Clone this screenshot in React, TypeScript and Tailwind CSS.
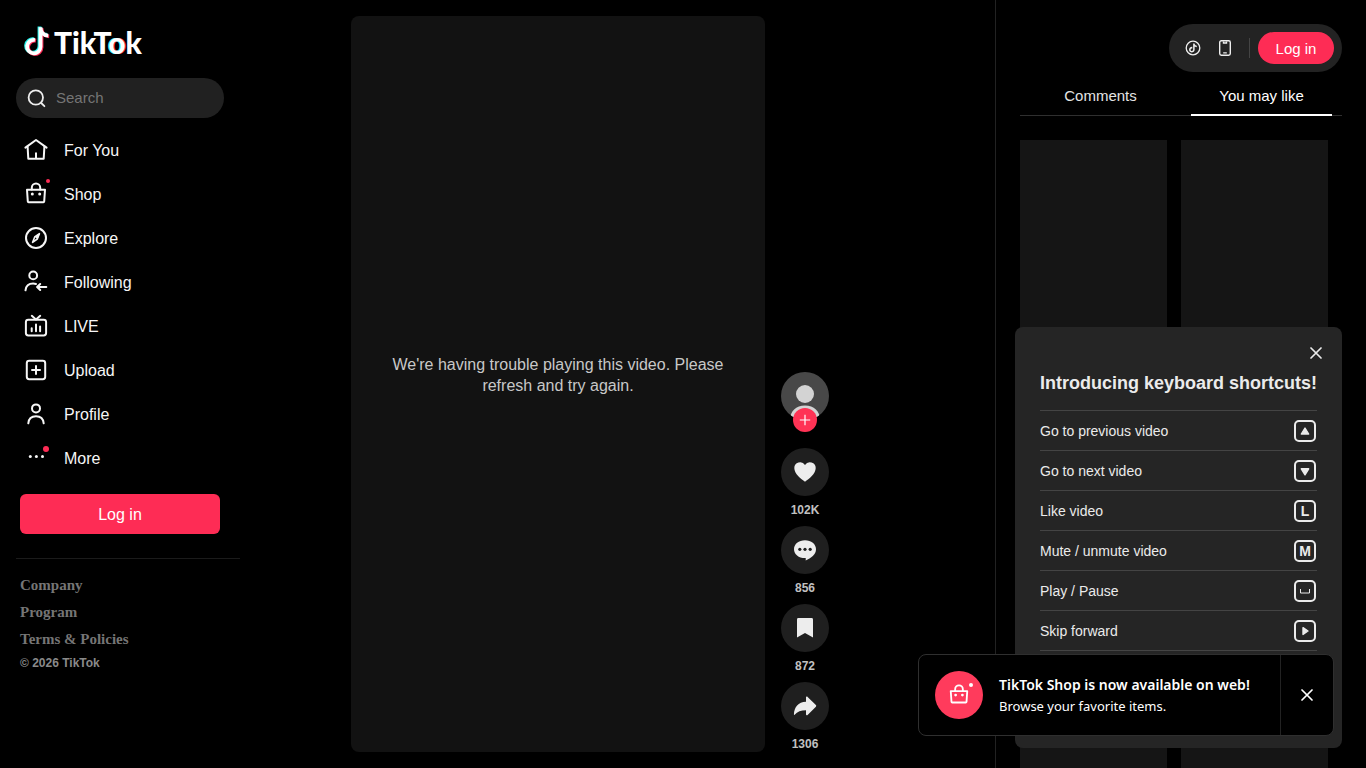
import type { ReactNode } from "react";

const NOTE =
  "M12.525.02c1.31-.02 2.61-.01 3.91-.02.08 1.53.63 3.09 1.75 4.17 1.12 1.11 2.7 1.62 4.24 1.79v4.03c-1.44-.05-2.89-.35-4.2-.97-.57-.26-1.1-.59-1.62-.93-.01 2.92.01 5.84-.02 8.75-.08 1.4-.54 2.79-1.35 3.94-1.31 1.92-3.58 3.17-5.91 3.21-1.43.08-2.86-.31-4.08-1.03-2.02-1.19-3.44-3.37-3.65-5.71-.02-.5-.03-1-.01-1.49.18-1.9 1.12-3.72 2.58-4.96 1.66-1.44 3.98-2.13 6.15-1.72.02 1.48-.04 2.96-.04 4.44-.99-.32-2.15-.23-3.02.37-.63.41-1.11 1.04-1.36 1.75-.21.51-.15 1.07-.14 1.61.24 1.64 1.82 3.02 3.5 2.87 1.12-.01 2.19-.66 2.77-1.61.19-.33.4-.67.41-1.06.1-1.79.06-3.57.07-5.36.01-4.03-.01-8.05.02-12.07z";

const LOGO_NOTE = "M10.400 13.300A6.700 6.700 0 1 0 15.900 20V.6M15.900.6C16.100 5.400 19 8.800 23.600 9";

function Line({ children, width = 2 }: { children: ReactNode; width?: number }) {
  return (
    <svg
      viewBox="0 0 24 24"
      className="size-6 shrink-0"
      fill="none"
      stroke="currentColor"
      strokeWidth={width}
      strokeLinecap="round"
      strokeLinejoin="round"
      aria-hidden="true"
    >
      {children}
    </svg>
  );
}

function Bag() {
  return (
    <>
      <path d="M3 7.700h18l-.8 11.800a.8.8 0 0 1-.8.700H4.600a.8.8 0 0 1-.8-.700Z" />
      <path d="M7.800 7.500V5.700a4.200 4.200 0 0 1 8.400 0v1.800" />
      <circle cx="8.300" cy="12" r="1.500" fill="currentColor" stroke="none" />
      <circle cx="15.700" cy="12" r="1.500" fill="currentColor" stroke="none" />
    </>
  );
}

function Cross() {
  return (
    <svg viewBox="0 0 12 12" className="size-3" fill="none" stroke="currentColor" strokeWidth="1.7" strokeLinecap="round" aria-hidden="true">
      <path d="M1 1l10 10M11 1L1 11" />
    </svg>
  );
}

const nav: { label: string; icon: ReactNode; dot?: "small" | "large" }[] = [
  {
    label: "For You",
    icon: (
      <Line>
        <path d="M1.400 9.600 12 2l10.600 7.600" />
        <path d="M3.600 8.600l.7 12.200h15.400l.7-12.200M12 15.200V20.500" />
      </Line>
    ),
  },
  { label: "Shop", dot: "small", icon: <Line><Bag /></Line> },
  {
    label: "Explore",
    icon: (
      <Line>
        <circle cx="12" cy="12" r="10" />
        <path d="M15.4 7.6 13.3 13l-4.7 3.4L10.700 11Z" strokeWidth="1.600" />
        <path d="M15.9 7.2 13.6 13.2l-1.600-1.200-1.200-1.600Z" fill="currentColor" stroke="none" />
      </Line>
    ),
  },
  {
    label: "Following",
    icon: (
      <Line>
        <circle cx="9.200" cy="5.400" r="3.900" />
        <path d="M1.500 20.300c.5-4.400 3.600-6.800 7.600-6.800 1.100 0 2 .2 2.900.5" />
        <path d="M22.300 17h-9M16.200 14l-3.100 3 3.100 3" />
      </Line>
    ),
  },
  {
    label: "LIVE",
    icon: (
      <Line>
        <rect x="1.900" y="5.700" width="20.200" height="15.800" rx="2.400" />
        <path d="M7.800 1.800 12 5.400l4.200-3.600M7.700 14.300v2.900M12 10.600v6.600M16.100 12.600v4.600" />
      </Line>
    ),
  },
  {
    label: "Upload",
    icon: (
      <Line>
        <rect x="2.800" y="2.800" width="18.400" height="18.400" rx="2.400" />
        <path d="M12 8v8M8 12h8" />
      </Line>
    ),
  },
  {
    label: "Profile",
    icon: (
      <Line>
        <circle cx="12" cy="6.400" r="4" />
        <path d="M4.300 21.300c.4-4.600 3.300-7.100 7.700-7.100s7.300 2.500 7.700 7.100" />
      </Line>
    ),
  },
  {
    label: "More",
    dot: "large",
    icon: (
      <Line>
        <g fill="currentColor" stroke="none">
          <circle cx="6.300" cy="10.500" r="1.500" />
          <circle cx="12.400" cy="10.500" r="1.500" />
          <circle cx="18.500" cy="10.500" r="1.500" />
        </g>
      </Line>
    ),
  },
];

function Logo() {
  return (
    <a href="#home" aria-label="TikTok" className="flex h-8 items-start gap-1 px-2">
      <svg viewBox="0 0 26 30" className="h-[30px] w-[26px]" fill="none" strokeWidth="3.800" aria-hidden="true">
        <path d={LOGO_NOTE} transform="translate(-0.400 0)" stroke="#25f4ee" />
        <path d={LOGO_NOTE} transform="translate(1.600 1.400)" stroke="#fe2c55" />
        <path d={LOGO_NOTE} transform="translate(0.600 0.700)" stroke="#fff" />
      </svg>
      <span className="pt-0.5 font-['Lato',sans-serif] text-[30px] leading-7 font-black text-white">
        TikT
        <span className="[text-shadow:-1px_0_0_#25f4ee,1px_0_0_#fe2c55]">o</span>k
      </span>
    </a>
  );
}

function Sidebar() {
  return (
    <aside className="flex w-60 shrink-0 flex-col pt-[26px]">
      <div className="px-4">
        <Logo />
        <div className="mt-5 flex h-10 items-center gap-2 rounded-full bg-[#212121] px-2">
          <label htmlFor="search" aria-label="Search">
            <svg viewBox="0 0 24 24" className="size-6" fill="none" stroke="#eee" strokeWidth="1.800" strokeLinecap="round" aria-hidden="true">
              <circle cx="11.800" cy="11.500" r="7.200" />
              <path d="M17.200 17l3.200 3.200" />
            </svg>
          </label>
          <input
            id="search"
            type="search"
            placeholder="Search"
            className="w-32 bg-transparent text-[15px] text-white outline-none placeholder:text-[#757575]"
          />
        </div>
      </div>
      <nav className="mt-[10px] px-4">
        <ul>
          {nav.map((item) => (
            <li key={item.label}>
              <a href={"#" + item.label} className="flex h-11 items-center gap-4 px-2 text-base text-[#f6f6f6]">
                <span className="relative">
                  {item.icon}
                  {item.dot === "small" && <span className="absolute -top-[3px] -right-0.5 size-1 rounded-full bg-[#fe2c55]" />}
                  {item.dot === "large" && <span className="absolute -right-px top-0 size-1.5 rounded-full bg-[#fe2c55]" />}
                </span>
                <span className="pt-0.5">{item.label}</span>
              </a>
            </li>
          ))}
        </ul>
      </nav>
      <button type="button" className="mx-5 mt-[14px] h-10 rounded-md bg-[#fe2c55] pt-0.5 text-base text-white">
        Log in
      </button>
      <div className="ml-4 mt-6 border-t border-[#1b1b1b]" />
      <footer className="px-5 pt-[13px] text-[#8a8a8a]">
        <div className="flex flex-col font-['Liberation_Serif',serif] text-[15px] leading-[27px] font-bold text-[#757575]">
          <a href="#company">Company</a>
          <a href="#program">Program</a>
          <a href="#terms">Terms &amp; Policies</a>
        </div>
        <p className="mt-0.5 text-xs font-bold">© 2026 TikTok</p>
      </footer>
    </aside>
  );
}

const actions: { name: string; count: string; icon: ReactNode }[] = [
  { name: "Like", count: "102K", icon: <path d="M12 21.700C8 19 1.300 13.700 1.300 8a5.800 5.800 0 0 1 10.700-3.100A5.800 5.800 0 0 1 22.700 8c0 5.700-6.700 11-10.700 13.700Z" /> },
  {
    name: "Comments",
    count: "856",
    icon: (
      <>
        <path d="M12 2.200c6.200 0 11 3.800 11 9 0 5.500-5 8.700-10.300 11.400V20C6 20.300 1 16.600 1 11.200c0-5.200 4.800-9 11-9Z" />
        <g fill="#1f1f1f">
          <circle cx="6.800" cy="11.300" r="1.600" />
          <circle cx="12" cy="11.300" r="1.600" />
          <circle cx="17.200" cy="11.300" r="1.600" />
        </g>
      </>
    ),
  },
  { name: "Save", count: "872", icon: <path d="M5.400 2h13.200a1.400 1.400 0 0 1 1.400 1.400v18.200L12 17l-8 4.600V3.400A1.400 1.400 0 0 1 5.400 2Z" /> },
  { name: "Share", count: "1306", icon: <path d="M13 3.600c0-.9 1-1.300 1.600-.7l8.300 8.200c.5.500.5 1.100 0 1.600l-8.300 8.200c-.6.600-1.600.2-1.600-.7v-4C8 16.300 4.200 17.600 1.900 20.600c-.4.500-1 .3-1-.4C1.200 13.200 5.200 8 13 7.700Z" /> },
];

function ActionBar() {
  return (
    <div className="flex w-12 flex-col justify-end gap-2">
      <div className="relative mb-5 size-12">
        <a href="#creator" aria-label="Creator profile">
          <svg viewBox="0 0 48 48" className="size-12" aria-hidden="true">
            <defs>
              <clipPath id="face">
                <circle cx="24" cy="24" r="24" />
              </clipPath>
            </defs>
            <g clipPath="url(#face)">
              <rect width="48" height="48" fill="#484848" />
              <circle cx="24" cy="22" r="9" fill="#d3d3d3" />
              <path d="M9 48c0-9 6-14.500 15-14.500S39 39 39 48Z" fill="#d3d3d3" />
            </g>
          </svg>
        </a>
        <button type="button" aria-label="Follow" className="absolute -bottom-3 left-3 flex size-6 items-center justify-center rounded-full bg-[#ff3355] text-white">
          <svg viewBox="0 0 12 12" className="size-3" stroke="currentColor" strokeWidth="1.200" aria-hidden="true">
            <path d="M6 .8v10.400M.8 6h10.400" />
          </svg>
        </button>
      </div>
      {actions.map((a) => (
        <div key={a.name} className="flex flex-col items-center gap-1.5">
          <button type="button" aria-label={a.name} className="flex size-12 items-center justify-center rounded-full bg-[#1f1f1f] text-[#ededed]">
            <svg viewBox="0 0 24 24" className="size-6" fill="currentColor" aria-hidden="true">
              {a.icon}
            </svg>
          </button>
          <strong className="text-xs font-bold text-[#c0c0c0]">{a.count}</strong>
        </div>
      ))}
    </div>
  );
}

function RightPanel() {
  return (
    <aside className="flex w-[371px] shrink-0 flex-col border-l border-[#222] pt-6 pr-6 pl-6">
      <div className="flex h-12 items-center self-end rounded-full bg-[#232323] pr-2 pl-3 text-[#eee]">
        <button type="button" aria-label="Get coins" className="flex size-6 items-center justify-center">
          <svg viewBox="0 0 16 16" className="size-4" aria-hidden="true">
            <circle cx="8" cy="8" r="6.800" fill="none" stroke="currentColor" strokeWidth="1.300" />
            <path d={NOTE} transform="translate(3.500 3.500) scale(0.370)" fill="currentColor" />
          </svg>
        </button>
        <button type="button" aria-label="Get app" className="ml-2 flex size-6 items-center justify-center">
          <svg viewBox="0 0 16 16" className="size-4" fill="none" stroke="currentColor" strokeWidth="1.400" aria-hidden="true">
            <rect x="2.700" y="0.800" width="10.600" height="14.400" rx="1.600" />
            <path d="M6.500 1.500v1.500h3V1.500M6.200 12.900h3.600" />
          </svg>
        </button>
        <span className="ml-3 h-5 w-px bg-[#444]" />
        <button type="button" className="ml-2 h-8 w-[76px] rounded-full bg-[#fe2c55] pt-0.5 text-[15px] text-white">
          Log in
        </button>
      </div>
      <div role="tablist" className="mt-1 grid h-10 grid-cols-2 border-b border-[#2f2f2f] text-[15px]">
        <button type="button" role="tab" aria-selected="false" className="pt-0.5 text-[#e4e4e4]">
          Comments
        </button>
        <button type="button" role="tab" aria-selected="true" className="relative pt-0.5 text-white">
          You may like
          <span className="absolute inset-x-[10px] -bottom-px h-0.5 bg-white" />
        </button>
      </div>
      <div className="mt-6 grid flex-1 grid-cols-2 gap-[14px] pr-[14px]">
        <div className="bg-[#151515]" />
        <div className="bg-[#151515]" />
      </div>
    </aside>
  );
}

const shortcuts: { label: string; glyph: ReactNode }[] = [
  { label: "Go to previous video", glyph: <path d="M11 8 14.700 14H7.300Z" fill="currentColor" strokeWidth="1.400" /> },
  { label: "Go to next video", glyph: <path d="M11 14.800 14.700 8.800H7.300Z" fill="currentColor" strokeWidth="1.400" /> },
  { label: "Like video", glyph: "L" },
  { label: "Mute / unmute video", glyph: "M" },
  { label: "Play / Pause", glyph: <path d="M6.500 9v4h9V9" strokeWidth="1" strokeLinejoin="miter" /> },
  { label: "Skip forward", glyph: <path d="M14 11 9 14.400V7.600Z" fill="currentColor" strokeWidth="1.400" /> },
];

function Shortcuts() {
  return (
    <section className="absolute right-6 bottom-5 w-[327px] rounded-lg bg-[#252525] px-[25px] pt-[14px] pb-[97px] text-[#ebebeb]">
      <div className="flex justify-end">
        <button type="button" aria-label="Close shortcuts" className="-mr-[11px] flex size-6 items-center justify-center">
          <Cross />
        </button>
      </div>
      <h2 className="mt-1.5 text-lg leading-6 font-bold whitespace-nowrap">Introducing keyboard shortcuts!</h2>
      <ul className="mt-[15px] border-b border-[#444]">
        {shortcuts.map((s) => (
          <li key={s.label} className="flex h-10 items-center justify-between border-t border-[#444] pr-px text-sm">
            {s.label}
            {typeof s.glyph === "string" ? (
              <kbd className="flex size-[22px] items-center justify-center rounded-[5px] border-2 border-current font-['Liberation_Sans',sans-serif] text-sm font-bold">
                {s.glyph}
              </kbd>
            ) : (
              <svg viewBox="0 0 22 22" className="size-[22px]" fill="none" stroke="currentColor" strokeLinejoin="round" aria-hidden="true">
                <rect x="1" y="1" width="20" height="20" rx="4" strokeWidth="2" />
                {s.glyph}
              </svg>
            )}
          </li>
        ))}
      </ul>
    </section>
  );
}

function ShopToast() {
  return (
    <div role="status" className="absolute right-8 bottom-8 flex h-[82px] w-[416px] rounded-lg border border-[#2f2f2f] bg-black font-['Noto_Sans','Open_Sans',sans-serif] text-white">
      <div className="flex flex-1 items-center gap-4 pl-4">
        <span className="relative flex size-12 items-center justify-center rounded-full bg-[#ff3b5c]">
          <svg viewBox="0 0 24 24" className="size-[22px]" fill="none" stroke="currentColor" strokeWidth="2" strokeLinejoin="round" aria-hidden="true">
            <Bag />
          </svg>
          <span className="absolute top-3 right-[10px] size-1 rounded-full bg-white" />
        </span>
        <div className="whitespace-nowrap">
          <p className="text-sm leading-[22px] font-semibold">TikTok Shop is now available on web!</p>
          <p className="text-[13px] leading-5">Browse your favorite items.</p>
        </div>
      </div>
      <button type="button" aria-label="Dismiss" className="flex w-[53px] items-center justify-center border-l border-[#222]">
        <Cross />
      </button>
    </div>
  );
}

export default function App() {
  return (
    <div className="relative flex h-screen overflow-hidden bg-black font-['Liberation_Sans',Arial,sans-serif]">
      <Sidebar />
      <main className="flex min-w-0 flex-1 justify-center gap-4 py-4 pr-[55px]">
        <section className="flex aspect-[9/16] h-full items-center justify-center rounded-lg bg-[#121212] px-8">
          <p className="pb-[18px] text-center text-base leading-[21px] text-[#c8c8c8]">
            We're having trouble playing this video. Please refresh and try again.
          </p>
        </section>
        <ActionBar />
      </main>
      <RightPanel />
      <Shortcuts />
      <ShopToast />
    </div>
  );
}
